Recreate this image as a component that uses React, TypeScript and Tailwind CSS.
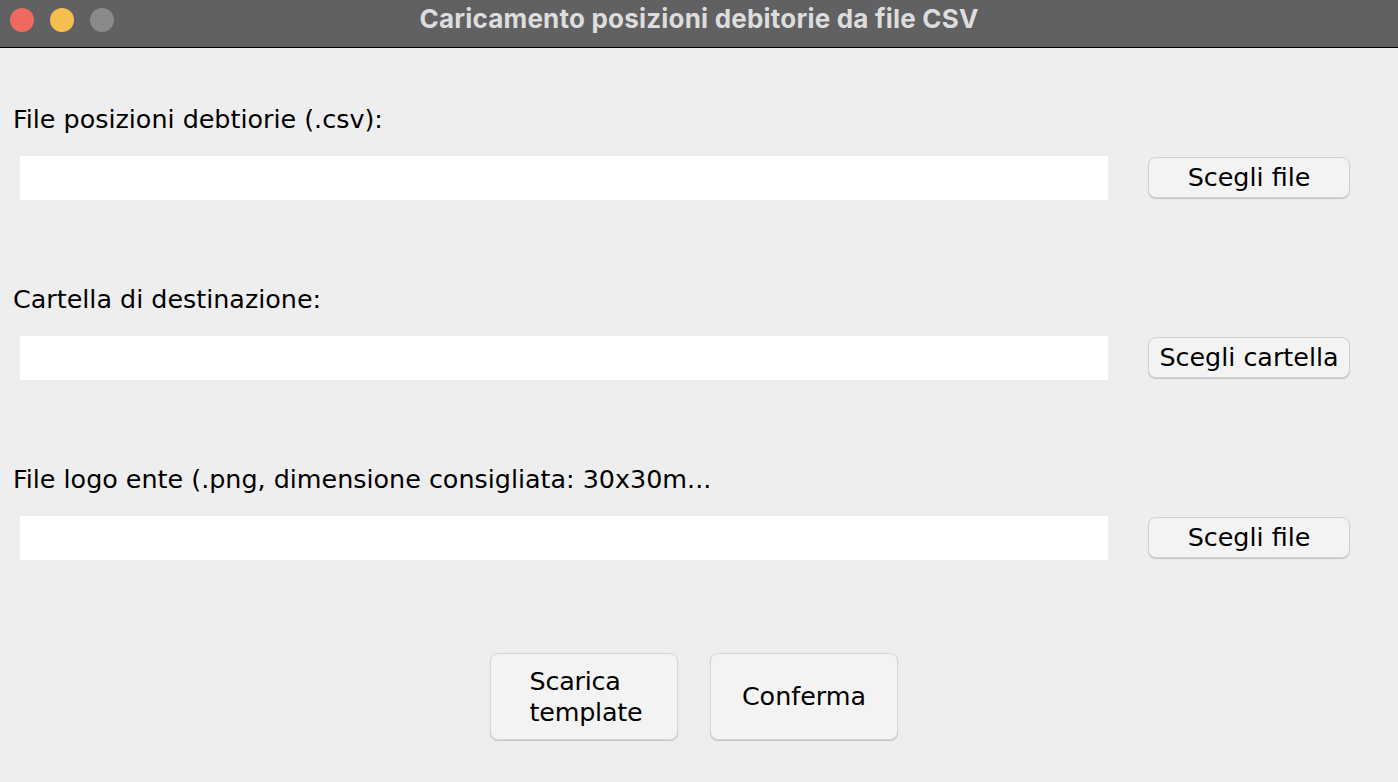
import React from "react";

const font = { fontFamily: '"DejaVu Sans", "Liberation Sans", sans-serif' };

function Field({ label, button }: { label: string; button: string }) {
  return (
    <div className="flex flex-col">
      <div className="pl-[13px] text-[25.4px] leading-[30px] text-black whitespace-nowrap">{label}</div>
      <div className="mt-[22px] flex items-start pl-[20px]">
        <div className="h-[44px] w-[1088px] bg-white" />
        <button className="ml-[40px] mt-[1px] h-[41px] w-[202px] rounded-[8px] border border-[#d2d2d2] bg-[#f3f3f3] pb-[1px] text-[25.4px] leading-[30px] text-black shadow-[0_1px_1px_rgba(0,0,0,0.18)]">
          {button}
        </button>
      </div>
    </div>
  );
}

export default function App() {
  return (
    <div className="flex h-[782px] w-[1398px] flex-col overflow-hidden bg-[#eeeeee]" style={font}>
      {/* Title bar */}
      <div className="relative flex h-[48px] shrink-0 justify-center border-b border-black bg-[#616163] pt-[4px]">
        <div className="absolute left-[10px] top-[8px] flex gap-[16px]">
          <span className="h-[24px] w-[24px] rounded-full bg-[#ee6a5f]" />
          <span className="h-[24px] w-[24px] rounded-full bg-[#f5bf4f]" />
          <span className="h-[24px] w-[24px] rounded-full bg-[#8a8a8c]" />
        </div>
        <span
          className="text-[26px] font-bold leading-[30px] tracking-[0.2px] text-[#dddddd]"
          style={{ fontFamily: 'Inter, "Liberation Sans", sans-serif' }}
        >
          Caricamento posizioni debitorie da file CSV
        </span>
      </div>

      {/* Body */}
      <div className="flex flex-col pt-[56px]">
        <Field label="File posizioni debtiorie (.csv):" button="Scegli file" />
        <div className="mt-[84px]">
          <Field label="Cartella di destinazione:" button="Scegli cartella" />
        </div>
        <div className="mt-[84px]">
          <Field label="File logo ente (.png, dimensione consigliata: 30x30m..." button="Scegli file" />
        </div>

        <div className="mt-[93px] flex justify-center gap-[32px] pr-[10px]">
          <button className="flex h-[87px] w-[188px] items-center justify-center rounded-[8px] border border-[#d6d6d6] bg-[#f3f3f3] text-[25.4px] leading-[31px] text-black shadow-[0_1px_1px_rgba(0,0,0,0.18)]">
            <span className="pl-[4px] text-left tracking-[-0.2px]">
              Scarica
              <br />
              template
            </span>
          </button>
          <button className="flex h-[87px] w-[188px] items-center justify-center rounded-[8px] border border-[#d6d6d6] bg-[#f3f3f3] text-[25.4px] leading-[31px] text-black shadow-[0_1px_1px_rgba(0,0,0,0.18)]">
            Conferma
          </button>
        </div>
      </div>
    </div>
  );
}
